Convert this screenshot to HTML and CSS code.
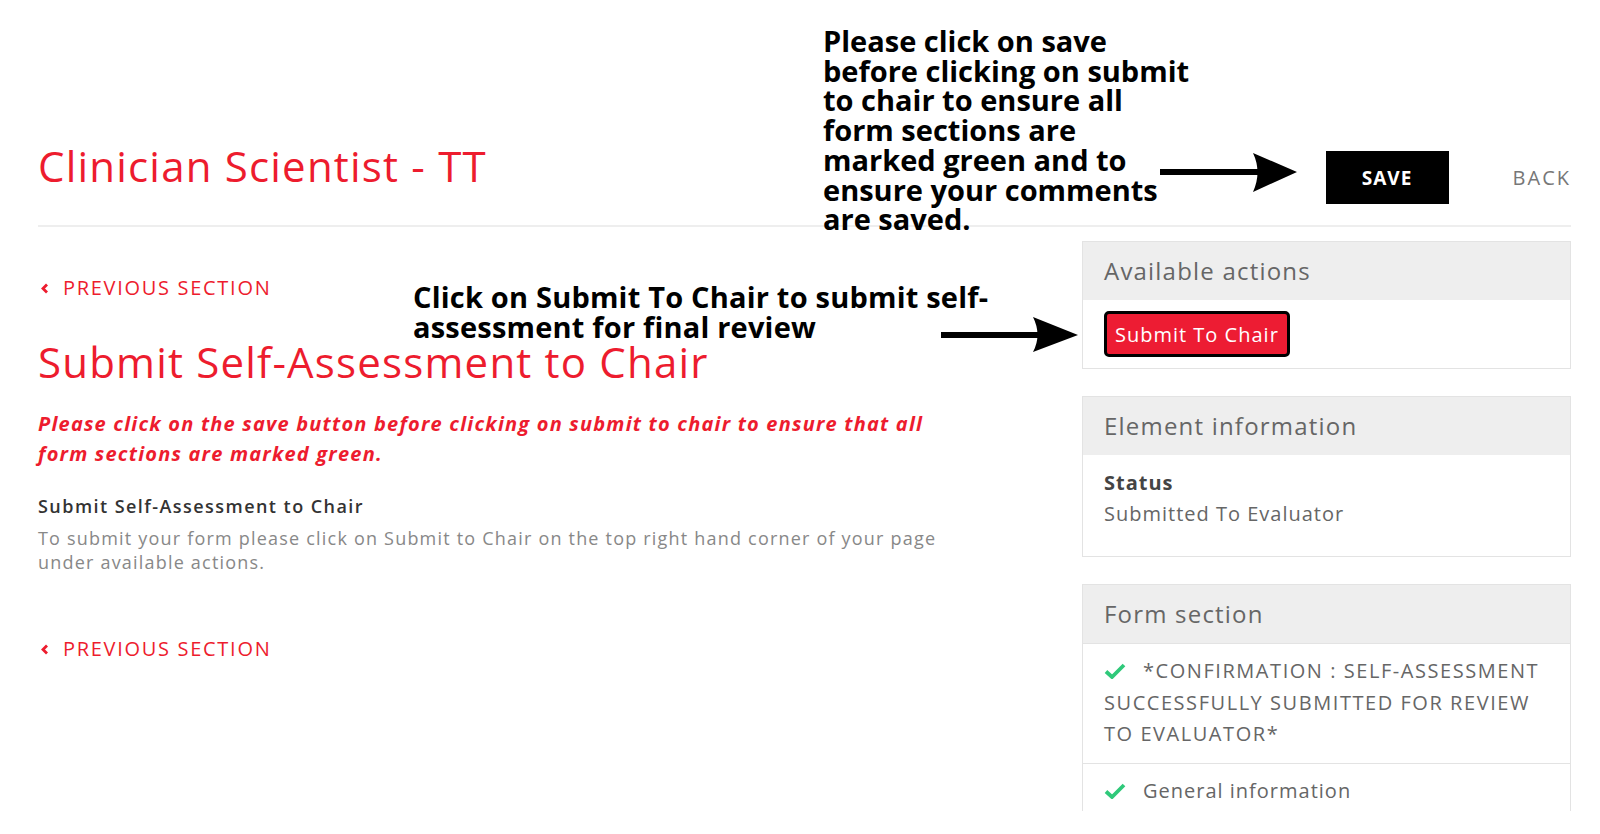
FILE: index.html
```html
<!DOCTYPE html>
<html>
  <head>
    <meta charset="utf-8" />
    <title>Clinician Scientist - TT</title>
    <link rel="stylesheet" href="styles.css">
  </head>

  <body>
    <div class="page">
      <header class="topbar">
        <h1 class="title">Clinician Scientist - TT</h1>
        <div class="top-actions">
          <button type="button" class="btn-save">SAVE</button>
          <a class="back" href="#">BACK</a>
        </div>
      </header>

      <div class="content">
        <main class="main">
          <a class="prev" href="#"><svg class="chev" width="9" height="11" viewBox="0 0 9 11"><path d="M7 1.5 L3 5.5 L7 9.5" fill="none" stroke="#ed1c2e" stroke-width="2.8" /></svg>PREVIOUS SECTION</a>
          <h2 class="section-title">Submit Self-Assessment to Chair</h2>
          <p class="warning">Please click on the save button before clicking on submit to chair to ensure that all form sections are marked green.</p>
          <h3 class="field-label">Submit Self-Assessment to Chair</h3>
          <p class="field-help">To submit your form please click on Submit to Chair on the top right hand corner of your page under available actions.</p>
          <a class="prev prev-bottom" href="#"><svg class="chev" width="9" height="11" viewBox="0 0 9 11"><path d="M7 1.5 L3 5.5 L7 9.5" fill="none" stroke="#ed1c2e" stroke-width="2.8" /></svg>PREVIOUS SECTION</a>
        </main>

        <aside class="sidebar">
          <div class="panel">
            <div class="panel-head">Available actions</div>
            <div class="panel-body actions">
              <button type="button" class="btn-submit">Submit To Chair</button>
            </div>
          </div>

          <div class="panel">
            <div class="panel-head">Element information</div>
            <div class="panel-body info">
              <div class="info-label">Status</div>
              <div class="info-value">Submitted To Evaluator</div>
            </div>
          </div>

          <div class="panel">
            <div class="panel-head">Form section</div>
            <div class="section-row caps">
              <svg class="check" width="22" height="16" viewBox="0 0 22 16"><path d="M2 8.5 L8 14 L20 2" fill="none" stroke="#2fc97a" stroke-width="3.8" /></svg>*CONFIRMATION : SELF-ASSESSMENT SUCCESSFULLY SUBMITTED FOR REVIEW TO EVALUATOR*
            </div>
            <div class="section-row">
              <svg class="check" width="22" height="16" viewBox="0 0 22 16"><path d="M2 8.5 L8 14 L20 2" fill="none" stroke="#2fc97a" stroke-width="3.8" /></svg>General information
            </div>
          </div>
        </aside>
      </div>

      <!-- annotations drawn over the page -->
      <div class="note note-save">Please click on save<br>before clicking on submit<br>to chair to ensure all<br>form sections are<br>marked green and to<br>ensure your comments<br>are saved.</div>
      <svg class="arrow arrow-save" width="140" height="42" viewBox="0 0 140 42">
        <rect x="0" y="17" width="100" height="6" />
        <path d="M93 1 Q102 20 93 40 L137 20 Z" />
      </svg>

      <div class="note note-submit">Click on Submit To Chair to submit self-<br>assessment for final review</div>
      <svg class="arrow arrow-submit" width="140" height="42" viewBox="0 0 140 42">
        <rect x="0" y="18" width="100" height="6" />
        <path d="M92 3 Q101 21 92 38 L137 21 Z" />
      </svg>
    </div>
  </body>
</html>
```

FILE: styles.css
```css
body {
  margin: 0;
  font-family: "Open Sans", "Liberation Sans", sans-serif;
  background: #fff;
  color: #666;
}

.page {
  position: relative;
  height: 811px;
  overflow: hidden;
  padding: 0 29px 0 38px;
}

/* top bar */
.topbar {
  display: flex;
  justify-content: space-between;
  align-items: center;
  box-sizing: border-box;
  height: 227px;
  padding-top: 130px;
  border-bottom: 2px solid #eeeeee;
}

.title {
  margin: 0 0 24px;
  font-size: 42px;
  line-height: 50px;
  font-weight: 400;
  letter-spacing: 1.2px;
  color: #ed1c2e;
}

.top-actions {
  display: flex;
  align-items: center;
  gap: 64px;
}

.btn-save {
  width: 123px;
  height: 53px;
  border: none;
  background: #000;
  color: #fff;
  font-family: inherit;
  font-size: 19px;
  font-weight: 700;
  letter-spacing: 1px;
}

.back {
  color: #777;
  font-size: 20px;
  letter-spacing: 2px;
  text-decoration: none;
}

/* main content */
.content {
  display: flex;
  justify-content: space-between;
  align-items: flex-start;
}

.main {
  width: 920px;
}

.prev {
  display: block;
  margin-top: 49px;
  color: #ed1c2e;
  font-size: 20px;
  line-height: 24px;
  letter-spacing: 1.7px;
  text-decoration: none;
}

.chev {
  margin: 0 14px 0 2px;
  vertical-align: 1px;
}

.prev-bottom {
  margin-top: 63px;
}

.section-title {
  margin: 37px 0 0;
  font-size: 42px;
  line-height: 50px;
  font-weight: 400;
  letter-spacing: 1.2px;
  color: #ed1c2e;
}

.warning {
  margin: 22px 0 0;
  font-size: 20px;
  line-height: 30px;
  font-weight: 700;
  font-style: italic;
  letter-spacing: 1.2px;
  color: #ed1c2e;
}

.field-label {
  margin: 25px 0 0;
  font-size: 18px;
  line-height: 24px;
  font-weight: 600;
  letter-spacing: 1.45px;
  color: #333;
}

.field-help {
  margin: 8px 0 0;
  font-size: 18px;
  line-height: 24px;
  letter-spacing: 1.2px;
  color: #888;
}

/* sidebar */
.sidebar {
  width: 489px;
  margin-top: 14px;
  display: flex;
  flex-direction: column;
  gap: 27px;
}

.panel {
  border: 1px solid #e3e3e3;
}

.panel-head {
  height: 58px;
  padding: 0 21px;
  background: #eeeeee;
  font-size: 24px;
  line-height: 58px;
  letter-spacing: 1.2px;
  color: #666;
}

.panel-body {
  padding: 0 21px;
}

.actions {
  padding-top: 11px;
  padding-bottom: 11px;
}

.btn-submit {
  height: 46px;
  padding: 0 8px;
  border: 3px solid #000;
  border-radius: 5px;
  background: #ed1c33;
  color: #fff;
  font-family: inherit;
  font-size: 20px;
  letter-spacing: 1px;
}

.info {
  padding-top: 12px;
  padding-bottom: 27px;
  font-size: 20px;
  line-height: 31px;
  letter-spacing: 1px;
}

.info-label {
  font-weight: 700;
  color: #444;
}

.section-row {
  padding: 11px 21px 13px;
  border-top: 1px solid #e3e3e3;
  font-size: 20px;
  line-height: 31.5px;
  letter-spacing: 1px;
  color: #666;
}

.section-row.caps {
  letter-spacing: 1.55px;
}

.check {
  margin-right: 17px;
  vertical-align: -1px;
}

/* annotations */
.note {
  position: absolute;
  font-family: "Open Sans", sans-serif;
  font-weight: 700;
  color: #000;
}

.note-save {
  left: 823px;
  top: 26px;
  font-size: 29px;
  line-height: 29.7px;
}

.note-submit {
  left: 413px;
  top: 282px;
  font-size: 29px;
  line-height: 30px;
  letter-spacing: 0.2px;
}

.arrow {
  position: absolute;
  fill: #000;
}

.arrow-save {
  left: 1160px;
  top: 152px;
}

.arrow-submit {
  left: 941px;
  top: 314px;
}
```
